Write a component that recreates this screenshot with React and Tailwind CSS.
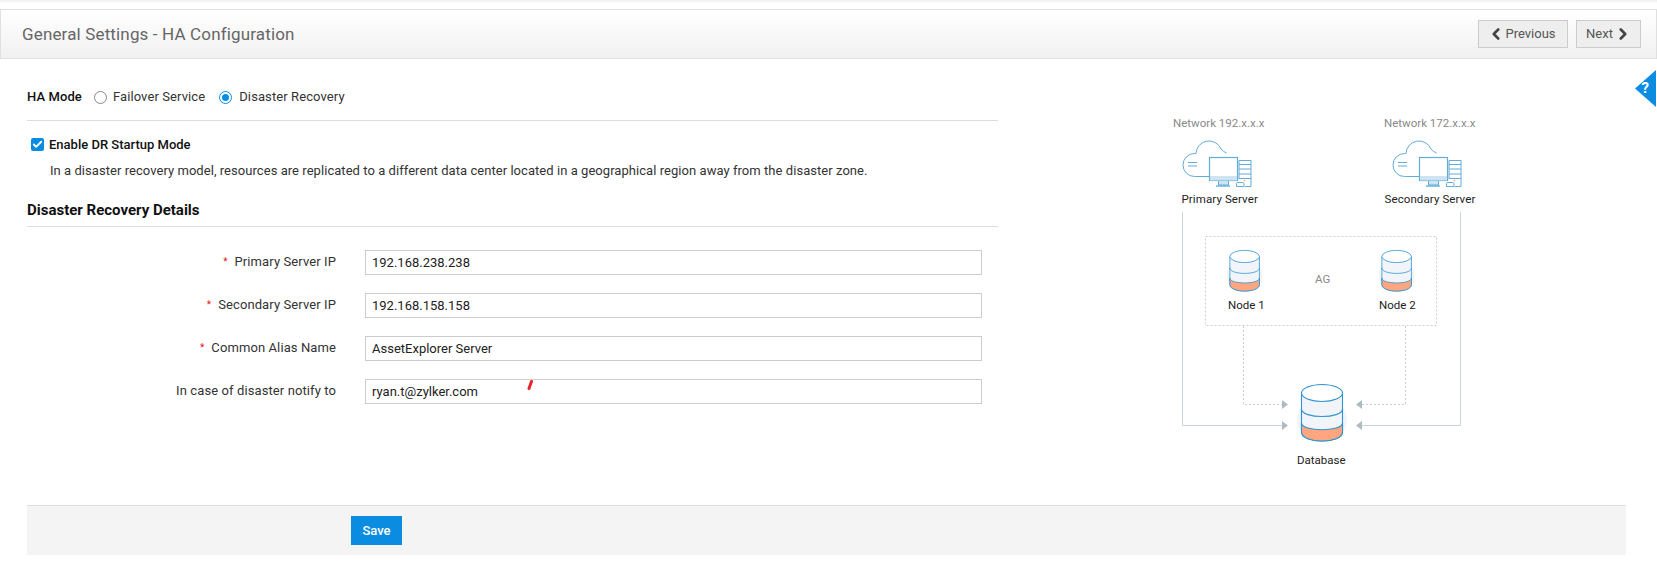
import React from 'react';
import { Check, ChevronLeft, ChevronRight } from 'lucide-react';

// Server + cloud illustration, drawn in a 68x45 box
const ServerIcon = ({ x, y }) => (
    <g transform={`translate(${x} ${y})`} fill="none" stroke="#62acd8" strokeWidth="1">
        <path d="M26 34.5 H11.5 A11.5 11.5 0 0 1 11.5 11.5 H13 A13 13 0 0 1 38 7 Q40 9.5 43.5 11" />
        <path d="M5 20.5 H14 M5 24 H14" />
        <rect x="26.5" y="15.5" width="28" height="23" fill="#fff" strokeWidth="1.2" />
        <rect x="27" y="34" width="27" height="4.5" fill="#cfe4f2" stroke="none" />
        <path d="M35.5 39 V43 H45.5 V39" fill="#cfe4f2" />
        <path d="M33 44 H47" strokeWidth="1.4" />
        <path d="M56 18.5 H68 V44.5 H62 M56 18.5 V37 M56 22.5 H68 M56 27 H68 M56 32 H68 M56 36.5 H68" />
        <path d="M53.5 44.5 V41.5 Q53.5 40.5 55 40.5 H59.5 Q61 40.5 61 41.5 V44.5 Z" fill="#fff" />
        <circle cx="61.5" cy="38.6" r="0.8" fill="#f6a07c" stroke="none" />
    </g>
);

// Three stacked discs with the lowest one orange, drawn in a 42x57 box
const DbIcon = ({ x, y, scale = 1 }) => (
    <g transform={`translate(${x} ${y}) scale(${scale})`} stroke="#2f93cf" strokeWidth="1.1">
        <ellipse cx="21" cy="36" rx="25" ry="22" fill="#f1f4f9" stroke="none" />
        <path d="M0.5 9 V48 C0.5 60 41.5 60 41.5 48 V9" fill="#f1f4f9" />
        <path d="M0.5 39 C0.5 48 41.5 48 41.5 39 V48 C41.5 60 0.5 60 0.5 48 Z" fill="#ffa681" />
        <path d="M0.5 25 C0.5 35 41.5 35 41.5 25" fill="none" />
        <ellipse cx="21" cy="9" rx="20.5" ry="8.5" fill="#fff" />
    </g>
);

const Diagram = () => (
    <svg viewBox="1150 110 340 370" className="ml-[152px] mt-[51px] h-[370px] w-[340px] shrink-0">
        <g fontFamily="Roboto, sans-serif" fontSize="11.5">
            <text x="1173" y="127" fill="#8a8a8a">Network 192.x.x.x</text>
            <text x="1384" y="127" fill="#8a8a8a">Network 172.x.x.x</text>
            <text x="1181.5" y="203" fill="#222" letterSpacing="0.1">Primary Server</text>
            <text x="1384.5" y="203" fill="#222" letterSpacing="0.1">Secondary Server</text>
            <text x="1315" y="283" fill="#8a8a8a">AG</text>
            <text x="1228" y="309" fill="#222">Node 1</text>
            <text x="1379" y="309" fill="#222">Node 2</text>
            <text x="1297" y="464" fill="#222">Database</text>
        </g>
        <ServerIcon x={1183} y={142} />
        <ServerIcon x={1393} y={142} />
        {/* solid links */}
        <path d="M1182.5 212 V425.5 H1283 M1460.5 212 V425.5 H1361" fill="none" stroke="#ccd4db" strokeWidth="1" />
        {/* availability group box + dashed links */}
        <rect x="1205.5" y="236.5" width="231" height="89" fill="none" stroke="#c9ced3" strokeDasharray="2 2" />
        <path d="M1243.5 326 V404.5 H1283 M1405.5 326 V404.5 H1361" fill="none" stroke="#c9ced3" strokeDasharray="2 2" />
        <path d="M1282 400 L1288 404.5 L1282 409 Z M1282 421 L1288 425.5 L1282 430 Z M1362 400 L1356 404.5 L1362 409 Z M1362 421 L1356 425.5 L1362 430 Z" fill="#aebcc2" />
        <DbIcon x={1229.5} y={250} scale={0.72} />
        <DbIcon x={1381.5} y={250} scale={0.72} />
        <DbIcon x={1301} y={384} />
    </svg>
);

const fields = [
    { label: 'Primary Server IP', value: '192.168.238.238', required: true },
    { label: 'Secondary Server IP', value: '192.168.158.158', required: true },
    { label: 'Common Alias Name', value: 'AssetExplorer Server', required: true },
    { label: 'In case of disaster notify to', value: 'ryan.t@zylker.com', required: false },
];

const App = () => {
    return (
        <div className="relative h-[569px] w-full overflow-hidden bg-white font-[family-name:Roboto,sans-serif] text-[13px] text-[#222]">
            {/* top strip */}
            <div className="h-[9px] bg-gradient-to-b from-[#f0f0f0] to-white to-40%" />

            {/* page title bar */}
            <header className="flex h-[50px] items-center justify-between border border-[#e0e0e0] bg-gradient-to-b from-white to-[#f1f1f1] pl-[21px] pr-[15px]">
                <h1 className="pt-[2px] text-[17px] tracking-[0.15px] text-[#666]">General Settings - HA Configuration</h1>
                <div className="flex gap-2">
                    <button className="flex h-[28px] w-[90px] items-center justify-center border border-[#ccc] bg-[#eee] pr-[3px] text-[13px] text-[#555]">
                        <ChevronLeft size={18} strokeWidth={3.5} className="text-[#444]" />
                        Previous
                    </button>
                    <button className="flex h-[28px] w-[65px] items-center justify-center gap-[1px] border border-[#ccc] bg-[#eee] pl-[1px] text-[13px] text-[#555]">
                        Next
                        <ChevronRight size={18} strokeWidth={3.5} className="text-[#444]" />
                    </button>
                </div>
            </header>

            {/* help tab */}
            <div className="absolute right-[1px] top-[70px] h-[37px] w-[21px] bg-[#0a8de0] [clip-path:polygon(100%_0,100%_100%,0_50%)]" />
            <span className="absolute right-[8px] top-[79px] text-[15px] font-bold leading-[18px] text-white">?</span>

            <main className="flex h-[446px] pl-[27px]">
                <div className="w-[971px] shrink-0">
                    {/* mode selection */}
                    <div className="flex h-[62px] items-center border-b border-[#ddd] pt-[15px] tracking-[0.1px]">
                        <span className="mr-[12px] font-medium text-[#111]">HA Mode</span>
                        <span className="mr-[6px] h-[13px] w-[13px] rounded-full border border-[#888] bg-white" />
                        <span className="mr-[14px] text-[#333]">Failover Service</span>
                        <span className="mr-[7px] flex h-[13px] w-[13px] items-center justify-center rounded-full border border-[#0a8de0]">
                            <span className="h-[7px] w-[7px] rounded-full bg-[#0a8de0]" />
                        </span>
                        <span className="text-[#333]">Disaster Recovery</span>
                    </div>

                    <div className="mt-[14px] flex items-center pl-[4px]">
                        <span className="mr-[5px] flex h-[13px] w-[13px] items-center justify-center rounded-[2px] bg-[#0a8de0]">
                            <Check size={11} strokeWidth={4} className="text-white" />
                        </span>
                        <span className="font-medium text-[#111]">Enable DR Startup Mode</span>
                    </div>
                    <p className="mt-[6px] pl-[23px] tracking-[0.05px] text-[#333]">
                        In a disaster recovery model, resources are replicated to a different data center located in a geographical region away from the disaster zone.
                    </p>

                    <h2 className="mt-[19px] border-b border-[#ddd] pb-[4px] text-[15px] font-bold text-[#111]">Disaster Recovery Details</h2>

                    {/* form */}
                    <div className="mt-[23px] flex flex-col gap-[18px]">
                        {fields.map((field) => (
                            <div key={field.label} className="flex items-center">
                                <label className="flex w-[309px] items-center justify-end tracking-[0.1px] text-[#333]">
                                    {field.required && <span className="mr-[7px] text-[10px] leading-none text-[#e02020]">*</span>}
                                    {field.label}
                                </label>
                                <input
                                    readOnly
                                    value={field.value}
                                    className="ml-[29px] h-[25px] w-[617px] border border-[#ccc] bg-white px-[6px] pt-[1px] text-[13px] text-[#222] outline-none"
                                />
                            </div>
                        ))}
                    </div>
                </div>
                <Diagram />
            </main>

            {/* stray pen mark over the last field */}
            <svg viewBox="0 0 6 10" className="absolute left-[527px] top-[380px] h-[10px] w-[6px]">
                <path d="M4.5 1.5 L2 8.5" stroke="#e8262a" strokeWidth="3" strokeLinecap="round" />
            </svg>

            {/* save bar */}
            <footer className="ml-[27px] flex h-[50px] w-[1599px] items-start border-t border-[#ddd] bg-[#f4f4f4] pl-[324px] pt-[10px]">
                <button className="flex h-[29px] w-[51px] items-center justify-center bg-[#0a8de0] text-[13px] font-medium text-white">Save</button>
            </footer>
        </div>
    );
};

export default App;
